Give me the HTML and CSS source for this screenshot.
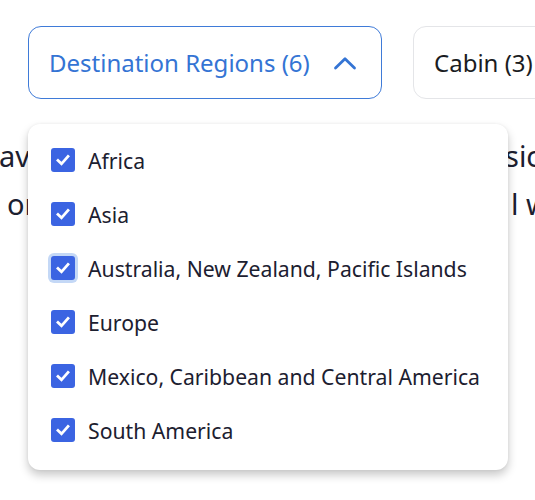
FILE: index.html
```html
<!DOCTYPE html>
<html lang="en">
<head>
<meta charset="utf-8">
<title>Filters</title>
<link rel="stylesheet" href="styles.css">
</head>
<body>
<div class="page">
  <div class="filters">
    <div class="filter-wrap">
      <button class="filter filter--open" type="button">
        <span class="filter-label">Destination Regions (6)</span>
        <svg class="chevron" width="24" height="14" viewBox="0 0 24 14" aria-hidden="true"><path d="M2.5 12 L12 2.8 L21.5 12" fill="none" stroke="currentColor" stroke-width="2.8" stroke-linecap="round" stroke-linejoin="round"/></svg>
      </button>
      <ul class="menu">
        <li class="option"><span class="box"><svg width="16" height="16" viewBox="0 0 16 16"><path d="M3 8.4 L6.5 11.8 L13 4.4" fill="none" stroke="#fff" stroke-width="2.8" stroke-linecap="square"/></svg></span>Africa</li>
        <li class="option"><span class="box"><svg width="16" height="16" viewBox="0 0 16 16"><path d="M3 8.4 L6.5 11.8 L13 4.4" fill="none" stroke="#fff" stroke-width="2.8" stroke-linecap="square"/></svg></span>Asia</li>
        <li class="option"><span class="box box--focus"><svg width="16" height="16" viewBox="0 0 16 16"><path d="M3 8.4 L6.5 11.8 L13 4.4" fill="none" stroke="#fff" stroke-width="2.8" stroke-linecap="square"/></svg></span>Australia, New Zealand, Pacific Islands</li>
        <li class="option"><span class="box"><svg width="16" height="16" viewBox="0 0 16 16"><path d="M3 8.4 L6.5 11.8 L13 4.4" fill="none" stroke="#fff" stroke-width="2.8" stroke-linecap="square"/></svg></span>Europe</li>
        <li class="option"><span class="box"><svg width="16" height="16" viewBox="0 0 16 16"><path d="M3 8.4 L6.5 11.8 L13 4.4" fill="none" stroke="#fff" stroke-width="2.8" stroke-linecap="square"/></svg></span>Mexico, Caribbean and Central America</li>
        <li class="option"><span class="box"><svg width="16" height="16" viewBox="0 0 16 16"><path d="M3 8.4 L6.5 11.8 L13 4.4" fill="none" stroke="#fff" stroke-width="2.8" stroke-linecap="square"/></svg></span>South America</li>
      </ul>
    </div>
    <button class="filter" type="button"><span class="filter-label filter-label--plain">Cabin (3)</span></button>
  </div>
  <div class="intro">
    <div class="intro-line"><span class="intro-left">ave</span><span class="intro-right">sic</span></div>
    <div class="intro-line"><span class="intro-left intro-left--2">on</span><span class="intro-right intro-right--2">l w</span></div>
  </div>
</div>
</body>
</html>
```

FILE: styles.css
```css
html, body {
  margin: 0;
  padding: 0;
  overflow: hidden;
  background: #ffffff;
}

body {
  font-family: "Noto Sans", "Open Sans", sans-serif;
  color: #1c2030;
}

.page {
  width: 535px;
  height: 500px;
  overflow: hidden;
}

.filters {
  display: flex;
  gap: 31px;
  padding: 26px 0 0 28px;
  white-space: nowrap;
}

.filter-wrap {
  position: relative;
}

.filter {
  display: flex;
  align-items: center;
  height: 73px;
  padding: 0 20px;
  border: 1px solid #e4e5e8;
  border-radius: 13px;
  background: #ffffff;
  font-family: inherit;
  cursor: pointer;
  flex-shrink: 0;
}

.filter--open {
  width: 354px;
  border-color: #3f7bd8;
  justify-content: space-between;
  padding-right: 24px;
}

.filter-label {
  font-size: 24px;
  color: #3474d4;
  letter-spacing: 0;
}

.filter-label--plain {
  color: #1a1c22;
}

.chevron {
  color: #3474d4;
  display: block;
}

.menu {
  position: absolute;
  top: 98px;
  left: 0;
  z-index: 2;
  width: 480px;
  box-sizing: border-box;
  margin: 0;
  padding: 9px 0 13px 23px;
  list-style: none;
  background: #ffffff;
  border-radius: 12px;
  box-shadow: 0 5px 10px rgba(0, 0, 0, 0.22), 0 0 3px rgba(0, 0, 0, 0.06);
}

.option {
  display: flex;
  align-items: center;
  gap: 13px;
  height: 54px;
  font-size: 21.2px;
  color: #1c2030;
}

.box {
  display: flex;
  align-items: center;
  justify-content: center;
  width: 24px;
  height: 24px;
  border-radius: 3px;
  background: #3b64e2;
  flex-shrink: 0;
}

.box--focus {
  box-shadow: 0 0 0 3px #c4d8f6;
}

.intro {
  margin-top: 33px;
  font-size: 29px;
  line-height: 48px;
  color: #1c2030;
}

.intro-line {
  display: flex;
  white-space: nowrap;
}

.intro-left {
  margin-left: -1px;
}

.intro-left--2 {
  margin-left: 7px;
}

.intro-right {
  margin-left: auto;
  width: 30px;
}

.intro-right--2 {
  width: 30px;
  margin-right: 0;
  text-indent: 6px;
}
```
